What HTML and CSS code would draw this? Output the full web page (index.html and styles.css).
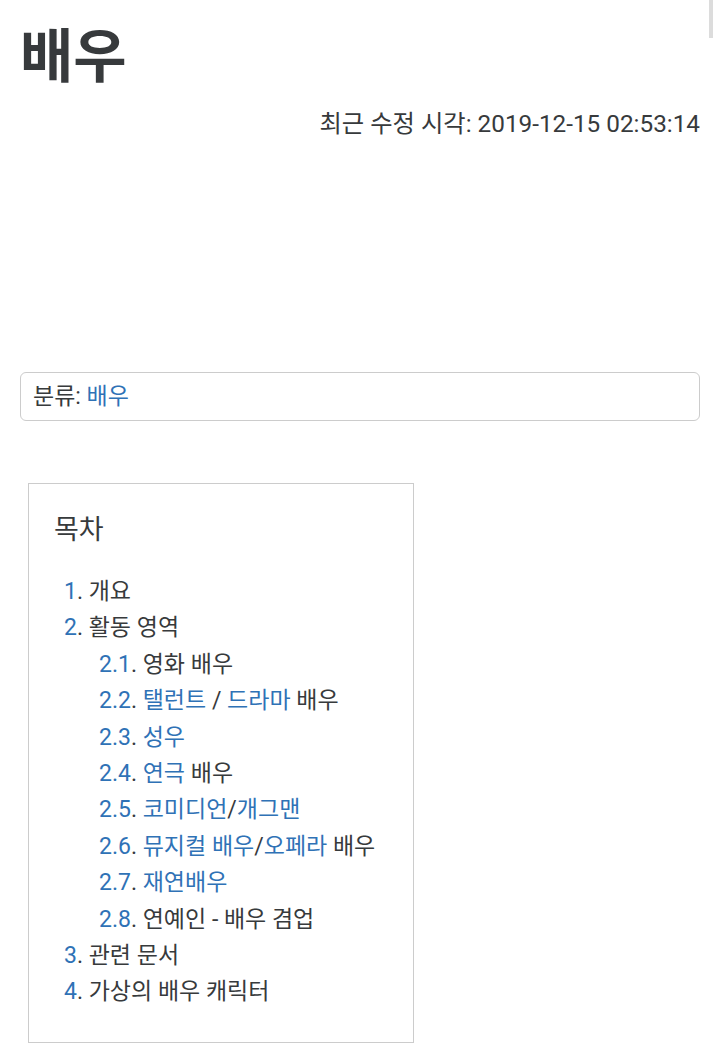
FILE: index.html
```html
<!DOCTYPE html>
<html lang="ko">
<head>
    <meta charset="UTF-8">
    <meta name="viewport" content="width=device-width, initial-scale=1.0">
    <title>배우</title>
    <link rel="stylesheet" href="styles.css">
</head>
<body>
    <div class="scroll-thumb"></div>

    <h1 class="title">배우</h1>
    <p class="last-edit">최근 수정 시각: 2019-12-15 02:53:14</p>

    <div class="category">분류: <a href="#">배우</a></div>

    <div class="toc">
        <h2 class="toc-title">목차</h2>
        <ul class="toc-list">
            <li><a href="#">1</a>. 개요</li>
            <li><a href="#">2</a>. 활동 영역
                <ul class="toc-sub">
                    <li><a href="#">2.1</a>. 영화 배우</li>
                    <li><a href="#">2.2</a>. <a href="#">탤런트</a> / <a href="#">드라마</a> 배우</li>
                    <li><a href="#">2.3</a>. <a href="#">성우</a></li>
                    <li><a href="#">2.4</a>. <a href="#">연극</a> 배우</li>
                    <li><a href="#">2.5</a>. <a href="#">코미디언</a>/<a href="#">개그맨</a></li>
                    <li><a href="#">2.6</a>. <a href="#">뮤지컬 배우</a>/<a href="#">오페라</a> 배우</li>
                    <li><a href="#">2.7</a>. <a href="#">재연배우</a></li>
                    <li><a href="#">2.8</a>. 연예인 - 배우 겸업</li>
                </ul>
            </li>
            <li><a href="#">3</a>. 관련 문서</li>
            <li><a href="#">4</a>. 가상의 배우 캐릭터</li>
        </ul>
    </div>
</body>
</html>
```

FILE: styles.css
```css
body {
    margin: 0;
    padding: 0 20px;
    background: #fff;
    color: #373a3c;
    font-family: Roboto, "Noto Sans CJK KR", sans-serif;
    font-size: 23px;
}

a {
    color: #2f72b6;
    text-decoration: none;
}

.scroll-thumb {
    position: fixed;
    top: 0;
    right: 7px;
    width: 4px;
    height: 38px;
    background: #dcdcdc;
}

.title {
    margin: 17px 0 0;
    font-size: 58px;
    font-weight: bold;
    line-height: 80px;
}

.last-edit {
    margin: 12px 0 0;
    text-align: right;
    font-size: 24.3px;
    line-height: 30px;
}

.category {
    margin-top: 233px;
    padding: 10px 12px;
    border: 1px solid #ccc;
    border-radius: 6px;
    line-height: 27px;
}

.toc {
    display: inline-block;
    margin: 62px 0 0 8px;
    padding: 26px 38px 31px 25px;
    border: 1px solid #ccc;
}

.toc-title {
    margin: 0 0 24px;
    font-size: 27px;
    font-weight: normal;
    line-height: 40px;
}

.toc-list,
.toc-sub {
    margin: 0;
    padding: 0 0 0 10px;
    list-style: none;
}

.toc-sub {
    padding-left: 35px;
}

.toc-list li {
    line-height: 36.4px;
}
```
